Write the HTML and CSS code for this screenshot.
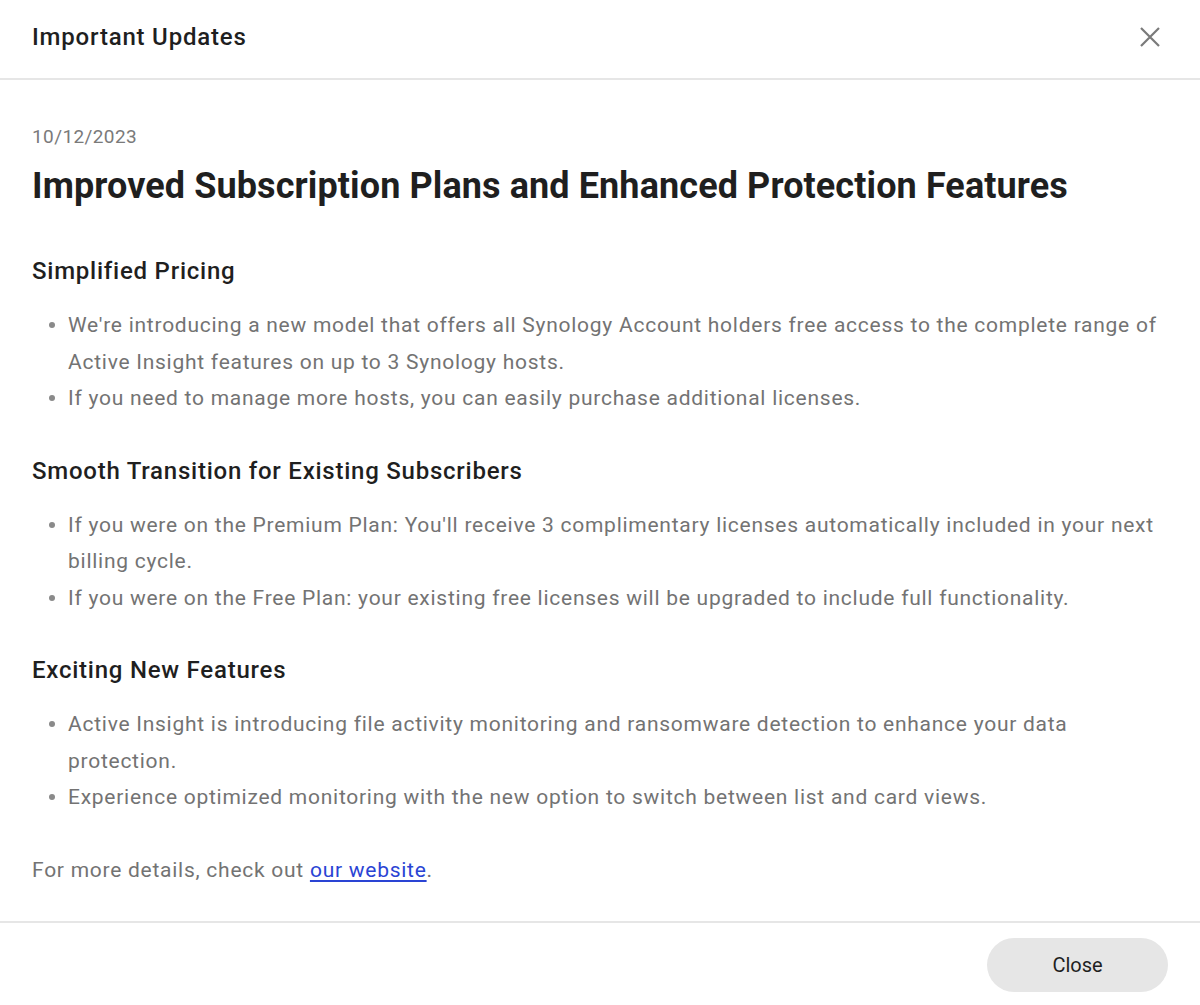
FILE: index.html
```html
<!DOCTYPE html>
<html lang="en">
<head>
<meta charset="utf-8">
<title>Important Updates</title>
<link rel="stylesheet" href="styles.css">
</head>
<body>
<div class="dialog">
  <header class="dialog-header">
    <h2 class="dialog-title">Important Updates</h2>
    <button class="icon-close" aria-label="Close">
      <svg width="20" height="20" viewBox="0 0 20 20"><path d="M1 1 L19 19 M19 1 L1 19" stroke="#7a7a7a" stroke-width="2.2" fill="none" stroke-linecap="butt"/></svg>
    </button>
  </header>
  <main class="dialog-body">
    <div class="date">10/12/2023</div>
    <h1 class="headline">Improved Subscription Plans and Enhanced Protection Features</h1>

    <h3 class="section-title">Simplified Pricing</h3>
    <ul class="list">
      <li>We're introducing a new model that offers all Synology Account holders free access to the complete range of Active Insight features on up to 3 Synology hosts.</li>
      <li>If you need to manage more hosts, you can easily purchase additional licenses.</li>
    </ul>

    <h3 class="section-title">Smooth Transition for Existing Subscribers</h3>
    <ul class="list">
      <li>If you were on the Premium Plan: You'll receive 3 complimentary licenses automatically included in your next billing cycle.</li>
      <li>If you were on the Free Plan: your existing free licenses will be upgraded to include full functionality.</li>
    </ul>

    <h3 class="section-title">Exciting New Features</h3>
    <ul class="list">
      <li>Active Insight is introducing file activity monitoring and ransomware detection to enhance your data protection.</li>
      <li>Experience optimized monitoring with the new option to switch between list and card views.</li>
    </ul>

    <p class="more">For more details, check out <a href="#">our website</a>.</p>
  </main>
  <footer class="dialog-footer">
    <button class="btn">Close</button>
  </footer>
</div>
</body>
</html>
```
FILE: styles.css
```css
* { box-sizing: border-box; }
html, body { margin: 0; padding: 0; background: #fff; }
body { font-family: Roboto, "Liberation Sans", sans-serif; color: #1f1f1f; }

.dialog { width: 1200px; height: 1005px; display: flex; flex-direction: column; }

.dialog-header {
  height: 80px;
  border-bottom: 2px solid #e6e6e6;
  display: flex;
  align-items: center;
  justify-content: space-between;
  padding: 0 40px 0 32px;
}
.dialog-title { margin: 0; font-size: 24px; font-weight: 500; line-height: 32px; letter-spacing: 0.8px; color: #1f1f1f; padding-bottom: 4px; }
.icon-close { border: 0; background: none; padding: 0; width: 20px; height: 20px; margin-top: -4px; cursor: pointer; display: block; }
.icon-close svg { display: block; }

.dialog-body { flex: 1; padding: 45px 32px 0 32px; }
.date { font-size: 19px; line-height: 24px; letter-spacing: 0.4px; color: #7a7a7a; }
.headline { margin: 13px 0 0; font-size: 36px; line-height: 48px; font-weight: 700; letter-spacing: 0.1px; color: #1f1f1f; }
.section-title { margin: 0; font-size: 24px; line-height: 32px; font-weight: 500; letter-spacing: 0.76px; color: #1f1f1f; }
.headline + .section-title { margin-top: 45px; }
.list + .section-title { margin-top: 38px; }
.list { margin: 20px 0 0; padding: 0 0 0 36px; list-style: none; font-size: 21px; line-height: 36.5px; letter-spacing: 0.74px; color: #737373; }
.list li { position: relative; }
.list li::before {
  content: ""; position: absolute; left: -19px; top: 15px;
  width: 6px; height: 6px; border-radius: 50%; background: #8a8a8a;
}
.more { margin: 36px 0 0; font-size: 21px; line-height: 36px; letter-spacing: 0.74px; color: #737373; }
.more a { color: #2a44d4; text-decoration: underline; text-underline-offset: 3px; }

.dialog-footer {
  height: 84px;
  border-top: 2px solid #e6e6e6;
  display: flex;
  align-items: center;
  justify-content: flex-end;
  padding: 2px 32px 0;
}
.btn {
  width: 181px; height: 54px; border: 0; border-radius: 27px; background: #e6e6e6;
  font-family: Roboto, "Liberation Sans", sans-serif; font-size: 20px; color: #1f1f1f; cursor: pointer;
}
```
